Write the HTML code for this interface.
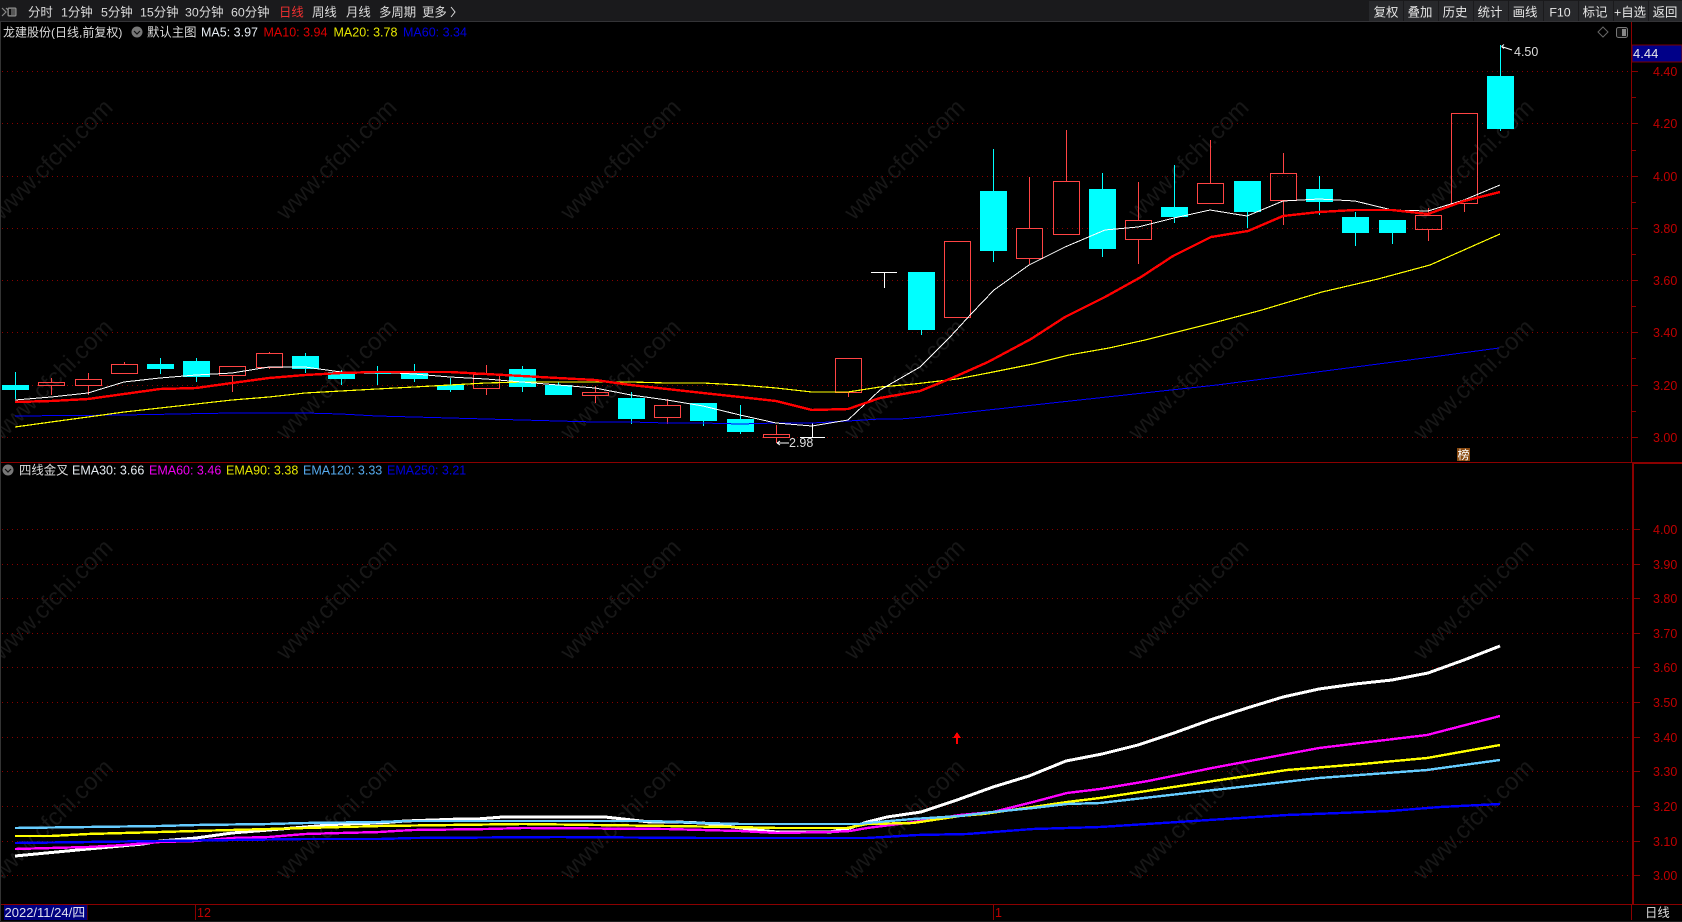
<!DOCTYPE html>
<html lang="zh"><head><meta charset="utf-8"><title>龙建股份</title>
<style>
html,body{margin:0;padding:0;background:#000;width:1682px;height:922px;overflow:hidden}
svg{display:block;position:absolute;left:0;top:0}
text{font-family:"Liberation Sans","Noto Sans CJK SC",sans-serif;font-size:12.4px}
.t{fill:#dcdcdc}.b{fill:#e6e6e6;text-anchor:middle}.a{fill:#c00000;font-size:12.5px}
.w{font-size:24px;fill:#171717;text-anchor:middle}
.c{shape-rendering:crispEdges}
</style></head><body>
<svg width="1682" height="922" viewBox="0 0 1682 922" xmlns="http://www.w3.org/2000/svg">
<rect width="1682" height="922" fill="#000"/>
<!-- watermark -->
<g class="wm">
<text class="w" transform="rotate(-45 58 165)" x="58" y="165">www.cfchi.com</text>
<text class="w" transform="rotate(-45 342 165)" x="342" y="165">www.cfchi.com</text>
<text class="w" transform="rotate(-45 626 165)" x="626" y="165">www.cfchi.com</text>
<text class="w" transform="rotate(-45 910 165)" x="910" y="165">www.cfchi.com</text>
<text class="w" transform="rotate(-45 1194 165)" x="1194" y="165">www.cfchi.com</text>
<text class="w" transform="rotate(-45 1479 165)" x="1479" y="165">www.cfchi.com</text>
<text class="w" transform="rotate(-45 58 385)" x="58" y="385">www.cfchi.com</text>
<text class="w" transform="rotate(-45 342 385)" x="342" y="385">www.cfchi.com</text>
<text class="w" transform="rotate(-45 626 385)" x="626" y="385">www.cfchi.com</text>
<text class="w" transform="rotate(-45 910 385)" x="910" y="385">www.cfchi.com</text>
<text class="w" transform="rotate(-45 1194 385)" x="1194" y="385">www.cfchi.com</text>
<text class="w" transform="rotate(-45 1479 385)" x="1479" y="385">www.cfchi.com</text>
<text class="w" transform="rotate(-45 58 605)" x="58" y="605">www.cfchi.com</text>
<text class="w" transform="rotate(-45 342 605)" x="342" y="605">www.cfchi.com</text>
<text class="w" transform="rotate(-45 626 605)" x="626" y="605">www.cfchi.com</text>
<text class="w" transform="rotate(-45 910 605)" x="910" y="605">www.cfchi.com</text>
<text class="w" transform="rotate(-45 1194 605)" x="1194" y="605">www.cfchi.com</text>
<text class="w" transform="rotate(-45 1479 605)" x="1479" y="605">www.cfchi.com</text>
<text class="w" transform="rotate(-45 58 825)" x="58" y="825">www.cfchi.com</text>
<text class="w" transform="rotate(-45 342 825)" x="342" y="825">www.cfchi.com</text>
<text class="w" transform="rotate(-45 626 825)" x="626" y="825">www.cfchi.com</text>
<text class="w" transform="rotate(-45 910 825)" x="910" y="825">www.cfchi.com</text>
<text class="w" transform="rotate(-45 1194 825)" x="1194" y="825">www.cfchi.com</text>
<text class="w" transform="rotate(-45 1479 825)" x="1479" y="825">www.cfchi.com</text>
</g>
<!-- grid -->
<path class="c" fill="none" stroke="#8a0000" stroke-dasharray="1 4" d="M2 71.5H1630M2 123.5H1630M2 176.5H1630M2 228.5H1630M2 280.5H1630M2 332.5H1630M2 385.5H1630M2 437.5H1630M2 529.5H1630M2 564.5H1630M2 598.5H1630M2 633.5H1630M2 667.5H1630M2 702.5H1630M2 737.5H1630M2 771.5H1630M2 806.5H1630M2 841.5H1630M2 875.5H1630"/>
<!-- frame -->
<g class="c" fill="none" stroke="#8b0000">
<path d="M1631.5 22V462M0 462.5H1633M0 904.5H1682M1631.5 905V920M87 905V920M195.5 905V920M993.5 905V920"/>
<path stroke-width="2" d="M1633 463V904M1632 463H1682"/>
<path d="M1632 71.5h6M1632 123.5h6M1632 176.5h6M1632 228.5h6M1632 280.5h6M1632 332.5h6M1632 385.5h6M1632 437.5h6M1632 97.5h4M1632 150.5h4M1632 202.5h4M1632 254.5h4M1632 306.5h4M1632 358.5h4M1632 411.5h4M1634 529.5h6M1634 564.5h6M1634 598.5h6M1634 633.5h6M1634 667.5h6M1634 702.5h6M1634 737.5h6M1634 771.5h6M1634 806.5h6M1634 841.5h6M1634 875.5h6"/>
</g>
<rect x="0" y="22" width="1" height="900" fill="#333" class="c"/>
<rect x="0" y="921" width="1682" height="1" fill="#1e1e1e" class="c"/>
<!-- cyan candles -->
<g class="c" fill="#00ffff">
<rect x="2" y="385" width="27" height="5"/><rect x="15" y="372" width="1" height="27"/>
<rect x="147" y="364" width="27" height="5"/><rect x="160" y="358" width="1" height="16"/>
<rect x="183" y="361" width="27" height="16"/><rect x="196" y="358" width="1" height="24"/>
<rect x="292" y="356" width="27" height="13"/><rect x="305" y="353" width="1" height="20"/>
<rect x="328" y="372" width="27" height="7"/><rect x="341" y="370" width="1" height="15"/>
<rect x="364" y="371" width="27" height="3"/><rect x="377" y="366" width="1" height="19"/>
<rect x="401" y="372" width="27" height="7"/><rect x="414" y="364" width="1" height="18"/>
<rect x="437" y="385" width="27" height="5"/><rect x="450" y="378" width="1" height="14"/>
<rect x="509" y="369" width="27" height="18"/><rect x="522" y="366" width="1" height="26"/>
<rect x="545" y="385" width="27" height="10"/><rect x="558" y="382" width="1" height="6"/>
<rect x="618" y="398" width="27" height="21"/><rect x="631" y="392" width="1" height="32"/>
<rect x="690" y="403" width="27" height="18"/><rect x="703" y="403" width="1" height="23"/>
<rect x="727" y="419" width="27" height="13"/><rect x="740" y="405" width="1" height="29"/>
<rect x="908" y="272" width="27" height="58"/><rect x="921" y="330" width="1" height="5"/>
<rect x="980" y="191" width="27" height="60"/><rect x="993" y="149" width="1" height="113"/>
<rect x="1089" y="189" width="27" height="60"/><rect x="1102" y="173" width="1" height="84"/>
<rect x="1161" y="207" width="27" height="10"/><rect x="1174" y="165" width="1" height="58"/>
<rect x="1234" y="181" width="27" height="31"/><rect x="1247" y="212" width="1" height="16"/>
<rect x="1306" y="189" width="27" height="13"/><rect x="1319" y="176" width="1" height="39"/>
<rect x="1342" y="217" width="27" height="16"/><rect x="1355" y="212" width="1" height="34"/>
<rect x="1379" y="220" width="27" height="13"/><rect x="1392" y="233" width="1" height="11"/>
<rect x="1487" y="76" width="27" height="53"/><rect x="1500" y="45" width="1" height="86"/>
</g>
<!-- red candles -->
<g class="c" fill="none" stroke="#ff4444">
<path d="M51.5 378V382M51.5 385V395M88.5 373V379M88.5 385V395M124.5 362V364M124.5 373V374M232.5 375V392M269.5 352V353M269.5 367V369M486.5 365V374M486.5 388V395M595.5 386V392M595.5 396V403M667.5 399V405M667.5 417V424M776.5 425V434M776.5 437V443M848.5 392V397M1029.5 177V228M1029.5 258V264M1066.5 130V181M1138.5 182V220M1138.5 239V264M1210.5 140V183M1283.5 153V173M1283.5 200V225M1428.5 208V215M1428.5 229V241M1464.5 203V212"/>
<rect x="38.5" y="382.5" width="26" height="3"/>
<rect x="75.5" y="379.5" width="26" height="6"/>
<rect x="111.5" y="364.5" width="26" height="9"/>
<rect x="219.5" y="366.5" width="26" height="9"/>
<rect x="256.5" y="353.5" width="26" height="14"/>
<rect x="473.5" y="374.5" width="26" height="14"/>
<rect x="582.5" y="392.5" width="26" height="3"/>
<rect x="654.5" y="405.5" width="26" height="12"/>
<rect x="763.5" y="434.5" width="26" height="3"/>
<rect x="835.5" y="358.5" width="26" height="34"/>
<rect x="944.5" y="241.5" width="26" height="76"/>
<rect x="1016.5" y="228.5" width="26" height="30"/>
<rect x="1053.5" y="181.5" width="26" height="53"/>
<rect x="1125.5" y="220.5" width="26" height="19"/>
<rect x="1197.5" y="183.5" width="26" height="20"/>
<rect x="1270.5" y="173.5" width="26" height="27"/>
<rect x="1415.5" y="215.5" width="26" height="14"/>
<rect x="1451.5" y="113.5" width="26" height="90"/>
</g>
<!-- doji white -->
<path class="c" fill="none" stroke="#fff" d="M800 437.5H825M812.5 423V437M871 272.5H897M884.5 272V288"/>
<!-- MA lines -->
<g class="c" fill="none">
<polyline stroke="#0000ff" stroke-width="1" points="15,416 124,415 232,413 305,413 341,414 377,416 414,417 450,418 486,419 522,420 558,421 595,422 631,422 667,423 703,423 740,424 776,423 812,423 848,421 880,419 900,419 924,417 1061,402 1217,385 1432,357 1499,348"/>
<polyline stroke="#ffff00" stroke-width="1.2" points="15,427 51,422 88,417 124,412 160,408 196,404 232,400 269,397 305,393 341,391 377,389 414,387 450,385 486,383 522,382 558,382 595,382 631,382 667,383 703,383 740,385 776,388 812,392 848,392 880,387 914,384 957,379 988,373 1033,364 1069,355 1109,348 1145,340 1213,323 1262,310 1322,292 1378,279 1430,265 1500,234"/>
<polyline stroke="#ffffff" stroke-width="1" points="15,400 51,397 88,393 124,382 160,378 196,375 232,373 269,367 305,367 341,372 377,372 414,374 450,377 486,379 522,382 558,385 595,388 631,395 667,400 703,406 740,415 776,423 812,426 848,420 880,390 920,367 950,337 972,313 994,290 1029,265 1065,247 1105,230 1138,227 1174,218 1210,210 1247,216 1283,201 1319,199 1355,201 1392,210 1428,211 1464,200 1500,185"/>
<polyline stroke="#ff0000" stroke-width="2.4" points="15,402 51,401 88,399 124,394 160,389 196,388 232,383 269,378 305,375 341,373 377,372 414,372 450,372 486,374 522,376 558,378 595,380 631,385 667,389 703,393 740,397 776,401 812,410 848,409 880,398 920,391 952,378 988,362 1031,339 1065,317 1105,297 1141,277 1173,256 1211,237 1248,231 1283,216 1319,212 1355,210 1392,210 1428,214 1464,201 1500,192"/>
</g>
<!-- EMA lines -->
<g class="c" fill="none" stroke-width="2.4">
<polyline stroke="#ffffff" stroke-width="3" points="15,856 88,849 143,844 160,841 196,838 232,833 269,830 305,827 341,824 380,823 405,821 460,819 477,819 503,817 605,817 623,819 650,822 677,822 703,823 733,827 757,830 777,832 830,832 850,828 867,822 887,817 921,812 957,800 993,787 1029,776 1066,761 1102,754 1138,745 1174,733 1210,720 1247,708 1283,697 1319,689 1355,684 1392,680 1428,673 1464,660 1500,646"/>
<polyline stroke="#ff00ff" points="15,849 51,848 88,847 124,845 160,842 196,841 232,838 269,837 305,834 341,833 380,832 395,831 413,830 487,829 523,828 667,829 703,830 740,831 777,833 830,832 850,831 867,828 907,823 960,815 993,812 1033,802 1067,793 1100,789 1148,781 1212,768 1319,748 1427,735 1500,716"/>
<polyline stroke="#ffff00" points="15,836 51,836 88,834 124,833 160,832 196,831 232,830 269,829 305,828 341,827 380,826 450,825 523,824 597,825 667,826 733,827 777,828 847,828 867,824 913,823 960,816 983,814 1033,807 1067,802 1100,798 1180,786 1287,770 1362,764 1427,758 1500,745"/>
<polyline stroke="#66ccff" points="15,828 88,827 160,826 196,825 269,824 305,823 380,822 405,821 650,821 677,822 703,823 740,824 860,824 867,823 913,819 960,816 993,812 1033,808 1067,804 1100,803 1319,778 1427,770 1500,760"/>
<polyline stroke="#0000ff" points="15,843 88,842 160,841 232,840 305,839 380,839 413,838 558,837 703,838 867,838 917,835 967,834 1033,829 1100,827 1287,815 1340,813 1390,811 1440,807 1500,804"/>
</g>
<!-- red arrow -->
<path class="c" d="M957 732L961 738H958V744H956V738H953Z" fill="#ff0000"/>
<!-- markers -->
<path fill="none" stroke="#fff" d="M1501.5 46.5L1504 44.5M1501.5 46.5L1504 48.5M1501.5 46.5L1512 50"/>
<text x="1514" y="56" fill="#dcdcdc" style="font-size:12.5px">4.50</text>
<path fill="none" stroke="#fff" d="M777 443H789M777 443L780 441M777 443L780 445"/>
<text x="789" y="447" fill="#dcdcdc" style="font-size:12.5px">2.98</text>
<rect class="c" x="1457" y="448" width="13" height="13" fill="#8a4a10"/>
<text x="1457.5" y="459" fill="#fff" style="font-size:12px">榜</text>
<!-- top bar -->
<rect class="c" x="0" y="0" width="1682" height="22" fill="#1a1a1c"/>
<rect class="c" x="0" y="21" width="1682" height="1" fill="#333336"/>
<path fill="none" stroke="#888" stroke-width="1.2" d="M2 8L6 12L2 16M6 8L9 11"/>
<rect x="8" y="8" width="8" height="8" rx="1" fill="#555" stroke="#999" stroke-width="1"/>
<rect x="9" y="9" width="2" height="6" fill="#111"/>
<text class="t" x="28" y="16.5">分时</text>
<text class="t" x="61" y="16.5">1分钟</text>
<text class="t" x="101" y="16.5">5分钟</text>
<text class="t" x="140" y="16.5">15分钟</text>
<text class="t" x="185" y="16.5">30分钟</text>
<text class="t" x="231" y="16.5">60分钟</text>
<text x="279" y="16.5" fill="#f03030">日线</text>
<text class="t" x="312" y="16.5">周线</text>
<text class="t" x="346" y="16.5">月线</text>
<text class="t" x="379" y="16.5">多周期</text>
<text class="t" x="422" y="16.5">更多</text>
<path fill="none" stroke="#dcdcdc" d="M451 7L455 12L451 17"/>
<g class="c" fill="#27282b">
<rect x="1369" y="1" width="34" height="20"/><rect x="1404" y="1" width="34" height="20"/><rect x="1439" y="1" width="34" height="20"/><rect x="1474" y="1" width="34" height="20"/><rect x="1509" y="1" width="34" height="20"/><rect x="1544" y="1" width="34" height="20"/><rect x="1579" y="1" width="34" height="20"/><rect x="1614" y="1" width="34" height="20"/><rect x="1649" y="1" width="33" height="20"/>
</g>
<text class="b" x="1386" y="16.5">复权</text>
<text class="b" x="1420" y="16.5">叠加</text>
<text class="b" x="1455" y="16.5">历史</text>
<text class="b" x="1490" y="16.5">统计</text>
<text class="b" x="1525" y="16.5">画线</text>
<text class="b" x="1560" y="16.5">F10</text>
<text class="b" x="1595" y="16.5">标记</text>
<text class="b" x="1630" y="16.5">+自选</text>
<text class="b" x="1665" y="16.5">返回</text>
<!-- legend 1 -->
<text class="t" x="3" y="36.5" style="font-size:12px">龙建股份(日线,前复权)</text>
<circle cx="137" cy="32" r="5.5" fill="#777"/><path fill="none" stroke="#111" stroke-width="1.2" d="M134 31L137 34L140 31"/>
<text class="t" x="147" y="36.5">默认主图</text>
<text x="201" y="36.5" fill="#e6ecf2" style="font-size:12.5px">MA5: 3.97</text>
<text x="263.5" y="36.5" fill="#e00000" style="font-size:12.5px">MA10: 3.94</text>
<text x="333.5" y="36.5" fill="#e6e600" style="font-size:12.5px">MA20: 3.78</text>
<text x="403" y="36.5" fill="#0000e0" style="font-size:12.5px">MA60: 3.34</text>
<!-- diamond / toggle -->
<path fill="none" stroke="#666" d="M1603 27L1608 32L1603 37L1598 32Z"/>
<rect x="1616.5" y="27.5" width="11" height="10" rx="2" fill="#111" stroke="#777"/><rect class="c" x="1622" y="29" width="4" height="7" fill="#888"/>
<!-- legend 2 -->
<circle cx="8" cy="470" r="5.5" fill="#777"/><path fill="none" stroke="#111" stroke-width="1.2" d="M5 469L8 472L11 469"/>
<text class="t" x="19" y="474.5">四线金叉</text>
<text x="72" y="474.5" fill="#e6ecf2" style="font-size:12.5px">EMA30: 3.66</text>
<text x="149" y="474.5" fill="#f000f0" style="font-size:12.5px">EMA60: 3.46</text>
<text x="226" y="474.5" fill="#e6e600" style="font-size:12.5px">EMA90: 3.38</text>
<text x="303" y="474.5" fill="#55aaee" style="font-size:12.5px">EMA120: 3.33</text>
<text x="387" y="474.5" fill="#0000e0" style="font-size:12.5px">EMA250: 3.21</text>
<!-- right axis -->
<rect class="c" x="1632" y="45" width="50" height="17" fill="#000088" stroke="#7a0000"/>
<text x="1633" y="58" fill="#eaeaea" style="font-size:13px">4.44</text>
<text class="a" x="1653" y="76">4.40</text>
<text class="a" x="1653" y="128">4.20</text>
<text class="a" x="1653" y="181">4.00</text>
<text class="a" x="1653" y="233">3.80</text>
<text class="a" x="1653" y="285">3.60</text>
<text class="a" x="1653" y="337">3.40</text>
<text class="a" x="1653" y="390">3.20</text>
<text class="a" x="1653" y="442">3.00</text>
<text class="a" x="1653" y="534">4.00</text>
<text class="a" x="1653" y="569">3.90</text>
<text class="a" x="1653" y="603">3.80</text>
<text class="a" x="1653" y="638">3.70</text>
<text class="a" x="1653" y="672">3.60</text>
<text class="a" x="1653" y="707">3.50</text>
<text class="a" x="1653" y="742">3.40</text>
<text class="a" x="1653" y="776">3.30</text>
<text class="a" x="1653" y="811">3.20</text>
<text class="a" x="1653" y="846">3.10</text>
<text class="a" x="1653" y="880">3.00</text>
<!-- bottom axis -->
<rect class="c" x="4" y="905" width="83" height="15" fill="#000080"/>
<text x="4.5" y="917" fill="#e0e0f0" style="font-size:13px">2022/11/24/四</text>
<text class="a" x="197" y="917">12</text>
<text class="a" x="995" y="917">1</text>
<text class="t" x="1645" y="917">日线</text>
</svg>
</body></html>
